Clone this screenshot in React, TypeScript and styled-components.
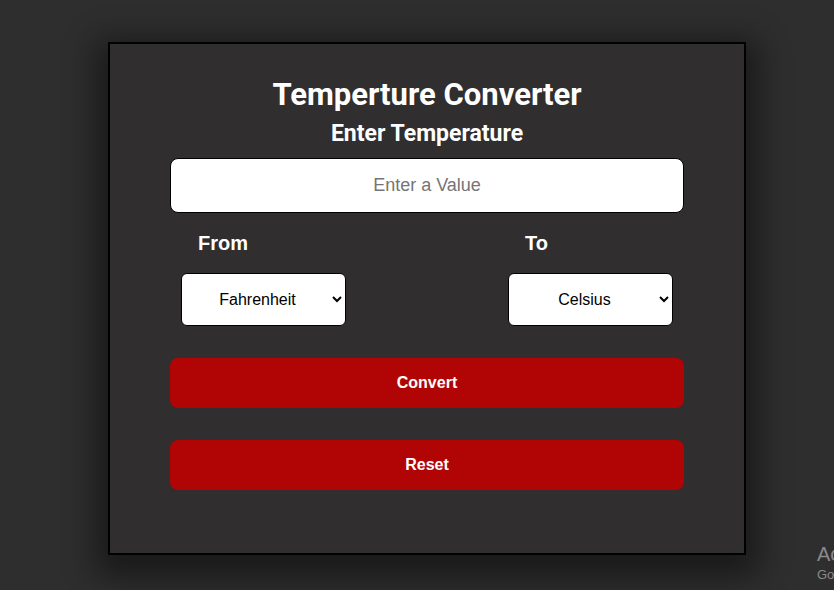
import styled, { createGlobalStyle } from "styled-components";

const GlobalStyle = createGlobalStyle`
  body {
    margin: 0;
    background: #2f2e2f;
    font-family: "Liberation Sans", Arial, sans-serif;
  }
`;

const Page = styled.div`
  position: relative;
  height: 590px;
  overflow: hidden;
  padding-top: 42px;
  box-sizing: border-box;
`;

const Card = styled.div`
  width: 638px;
  height: 513px;
  margin-left: 108px;
  box-sizing: border-box;
  border: 2px solid #000;
  background: #302e2f;
  box-shadow: 0 10px 30px 12px rgba(0, 0, 0, 0.45);
  padding: 33px 60px 0;
  display: flex;
  flex-direction: column;
  align-items: stretch;
`;

const Title = styled.h1`
  margin: 0;
  text-align: center;
  color: #fff;
  font-family: "Roboto", sans-serif;
  font-weight: 700;
  font-size: 31px;
  line-height: 36px;
`;

const SubTitle = styled.h2`
  margin: 8px 0 11px;
  text-align: center;
  color: #fff;
  font-family: "Roboto", sans-serif;
  font-weight: 700;
  font-size: 23px;
  line-height: 26px;
`;

const ValueInput = styled.input`
  height: 55px;
  box-sizing: border-box;
  border: 1px solid #000;
  border-radius: 8px;
  background: #fff;
  text-align: center;
  font-family: "Liberation Sans", Arial, sans-serif;
  font-size: 18px;
  outline: none;
  &::placeholder {
    color: #757575;
  }
`;

const UnitRow = styled.div`
  display: flex;
  justify-content: space-between;
  padding: 0 11px;
  margin-top: 18px;
`;

const UnitColumn = styled.div`
  display: flex;
  flex-direction: column;
  width: 165px;
`;

const UnitLabel = styled.label`
  padding-left: 17px;
  color: #fff;
  font-family: "Liberation Sans", Arial, sans-serif;
  font-weight: 700;
  font-size: 20px;
  line-height: 24px;
  margin-bottom: 18px;
`;

const UnitSelect = styled.select`
  height: 53px;
  box-sizing: border-box;
  border: 1px solid #000;
  border-radius: 6px;
  background: #fff;
  color: #000;
  text-align: center;
  font-family: "Liberation Sans", Arial, sans-serif;
  font-size: 16px;
  padding: 0 6px;
`;

const ActionButton = styled.button<{ $gap: number }>`
  margin-top: ${(p) => p.$gap}px;
  height: 50px;
  border: none;
  border-radius: 8px;
  background: #b10505;
  color: #fff;
  font-family: "Liberation Sans", Arial, sans-serif;
  font-weight: 700;
  font-size: 16px;
`;

const Watermark = styled.div`
  position: absolute;
  left: 817px;
  top: 542px;
  color: #8a8a8a;
  font-family: "Liberation Sans", Arial, sans-serif;
  white-space: nowrap;
`;

const WatermarkBig = styled.div`
  font-size: 20px;
  line-height: 24px;
`;

const WatermarkSmall = styled.div`
  font-size: 13px;
  line-height: 18px;
`;

export default function App() {
  return (
    <>
      <GlobalStyle />
      <Page>
        <Card>
          <Title>Temperture Converter</Title>
          <SubTitle>Enter Temperature</SubTitle>
          <ValueInput placeholder="Enter a Value" />
          <UnitRow>
            <UnitColumn>
              <UnitLabel>From</UnitLabel>
              <UnitSelect defaultValue="f">
                <option value="f">Fahrenheit</option>
                <option value="c">Celsius</option>
                <option value="k">Kelvin</option>
              </UnitSelect>
            </UnitColumn>
            <UnitColumn>
              <UnitLabel>To</UnitLabel>
              <UnitSelect defaultValue="c">
                <option value="c">Celsius</option>
                <option value="f">Fahrenheit</option>
                <option value="k">Kelvin</option>
              </UnitSelect>
            </UnitColumn>
          </UnitRow>
          <ActionButton $gap={32}>Convert</ActionButton>
          <ActionButton $gap={32}>Reset</ActionButton>
        </Card>
        <Watermark>
          <WatermarkBig>Activate Windows</WatermarkBig>
          <WatermarkSmall>Go to Settings to activate Windows.</WatermarkSmall>
        </Watermark>
      </Page>
    </>
  );
}
